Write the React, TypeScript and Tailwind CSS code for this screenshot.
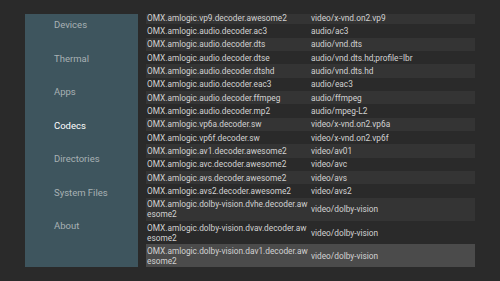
import React from 'react';

const MENU = ['Devices', 'Thermal', 'Apps', 'Codecs', 'Directories', 'System Files', 'About'];

const CODECS: [string, string][] = [
  ['OMX.amlogic.vp9.decoder.awesome2', 'video/x-vnd.on2.vp9'],
  ['OMX.amlogic.audio.decoder.ac3', 'audio/ac3'],
  ['OMX.amlogic.audio.decoder.dts', 'audio/vnd.dts'],
  ['OMX.amlogic.audio.decoder.dtse', 'audio/vnd.dts.hd;profile=lbr'],
  ['OMX.amlogic.audio.decoder.dtshd', 'audio/vnd.dts.hd'],
  ['OMX.amlogic.audio.decoder.eac3', 'audio/eac3'],
  ['OMX.amlogic.audio.decoder.ffmpeg', 'audio/ffmpeg'],
  ['OMX.amlogic.audio.decoder.mp2', 'audio/mpeg-L2'],
  ['OMX.amlogic.vp6a.decoder.sw', 'video/x-vnd.on2.vp6a'],
  ['OMX.amlogic.vp6f.decoder.sw', 'video/x-vnd.on2.vp6f'],
  ['OMX.amlogic.av1.decoder.awesome2', 'video/av01'],
  ['OMX.amlogic.avc.decoder.awesome2', 'video/avc'],
  ['OMX.amlogic.avs.decoder.awesome2', 'video/avs'],
  ['OMX.amlogic.avs2.decoder.awesome2', 'video/avs2'],
  ['OMX.amlogic.dolby-vision.dvhe.decoder.awesome2', 'video/dolby-vision'],
  ['OMX.amlogic.dolby-vision.dvav.decoder.awesome2', 'video/dolby-vision'],
  ['OMX.amlogic.dolby-vision.dav1.decoder.awesome2', 'video/dolby-vision'],
];

export default function App() {
  const selected = CODECS.length - 1;

  return (
    <div
      className="w-[500px] h-[281px] bg-[#2a2a2a] flex pt-[14px] pl-[25px] overflow-hidden"
      style={{ fontFamily: 'Roboto, sans-serif' }}
    >
      {/* Side menu */}
      <div className="w-[113px] h-[253px] bg-[#3e555e] flex flex-col pt-[4px] pl-[29px] gap-[19.5px]">
        {MENU.map((item) => (
          <div
            key={item}
            className={`text-[9.5px] leading-[14px] ${item === 'Codecs' ? 'text-white' : 'text-[#a8b1b4]'}`}
          >
            {item}
          </div>
        ))}
      </div>

      {/* Codec list */}
      <div className="ml-[8px] w-[329px] h-[253px] overflow-hidden">
        <div className="-mt-[3px] flex flex-col">
          {CODECS.map(([name, mime], i) => (
            <div
              key={name + i}
              className={`flex items-center text-[8.3px] text-[#d2d2d2] ${
                i === selected ? 'bg-[#4b4b4b]' : i % 2 === 0 ? 'bg-[#343434]' : ''
              }`}
            >
              <div className="w-[164px] pl-[1px] py-[1.66px] break-all leading-[10px] min-h-[13.33px] flex items-center">
                <span>{name}</span>
              </div>
              <div className="pl-[1px] leading-[10px]">{mime}</div>
            </div>
          ))}
        </div>
      </div>
    </div>
  );
}
